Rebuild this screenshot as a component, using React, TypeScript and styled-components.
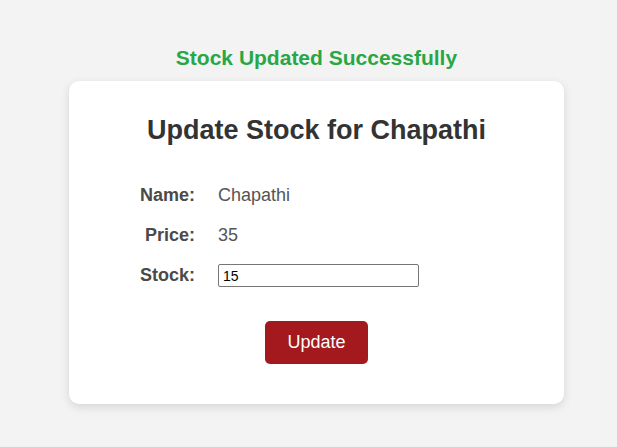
import React from "react";
import styled, { createGlobalStyle } from "styled-components";

const GlobalStyle = createGlobalStyle`
  html, body { margin: 0; padding: 0; background: #f3f3f3; }
  body { font-family: "Liberation Sans", Arial, sans-serif; }
`;

const Page = styled.div`
  display: flex;
  flex-direction: column;
  align-items: center;
  padding: 46px 0 40px 16px;
`;

const Message = styled.div`
  color: #28a745;
  font-size: 21px;
  font-weight: bold;
  line-height: 24px;
  margin-bottom: 11px;
`;

const Card = styled.div`
  width: 495px;
  box-sizing: border-box;
  background: #ffffff;
  border-radius: 10px;
  box-shadow: 0 3px 10px rgba(0, 0, 0, 0.12);
  padding: 34px 0 40px;
  display: flex;
  flex-direction: column;
  align-items: center;
`;

const Title = styled.h2`
  margin: 0 0 39px;
  color: #333333;
  font-size: 27px;
  font-weight: bold;
  line-height: 31px;
`;

const Fields = styled.div`
  align-self: flex-start;
  margin-left: 70px;
  display: grid;
  grid-template-columns: 56px auto;
  column-gap: 23px;
  row-gap: 18.5px;
  align-items: center;
`;

const Label = styled.div`
  text-align: right;
  font-weight: bold;
  font-size: 18px;
  line-height: 21px;
  color: #4a4a4a;
`;

const Value = styled.div`
  font-size: 18px;
  line-height: 21px;
  color: #555555;
`;

const StockInput = styled.input`
  width: 201px;
  height: 23px;
  box-sizing: border-box;
  border: 1px solid #767676;
  border-radius: 2px;
  padding: 1px 4px;
  font-family: "Liberation Sans", Arial, sans-serif;
  font-size: 14px;
  color: #000;
  background: #fff;
  outline: none;
`;

const Button = styled.button`
  margin-top: 34px;
  background: #a4191d;
  color: #ffffff;
  border: none;
  border-radius: 5px;
  padding: 11px 22px;
  font-family: "Liberation Sans", Arial, sans-serif;
  font-size: 18px;
  line-height: 21px;
  cursor: pointer;
`;

export default function App() {
  return (
    <>
      <GlobalStyle />
      <Page>
        <Message>Stock Updated Successfully</Message>
        <Card>
          <Title>Update Stock for Chapathi</Title>
          <Fields>
            <Label>Name:</Label>
            <Value>Chapathi</Value>
            <Label>Price:</Label>
            <Value>35</Value>
            <Label>Stock:</Label>
            <StockInput type="number" defaultValue={15} />
          </Fields>
          <Button>Update</Button>
        </Card>
      </Page>
    </>
  );
}
